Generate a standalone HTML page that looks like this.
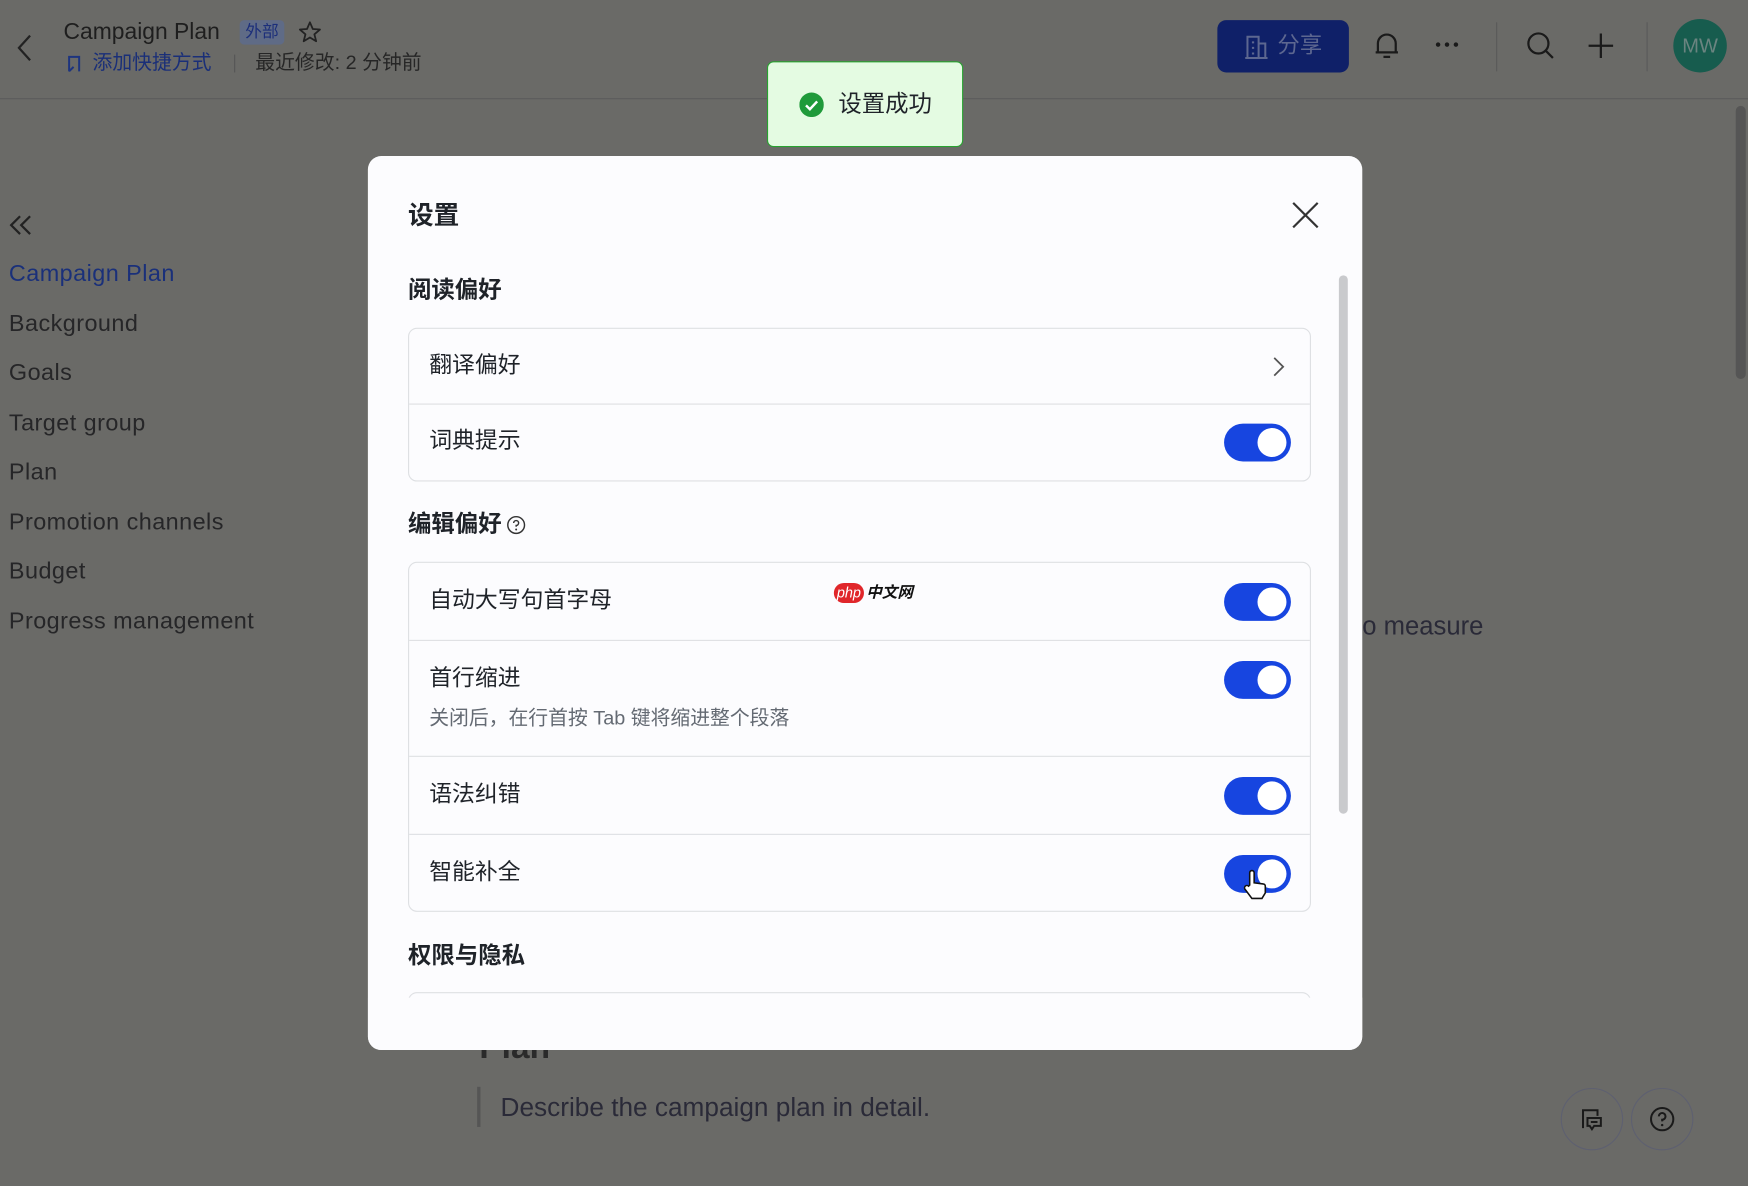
<!DOCTYPE html>
<html><head><meta charset="utf-8"><style>
*{margin:0;padding:0;box-sizing:border-box}
html,body{width:1748px;height:1186px;overflow:hidden;background:#6a6a67}
#w{position:absolute;left:0;top:0;width:1568px;height:1064px;transform:scale(1.1148,1.1147);transform-origin:0 0;font-family:"Liberation Sans","Noto Sans CJK SC",sans-serif}
.a{position:absolute;white-space:nowrap;line-height:1}
.side{color:#262628;font-size:21px;letter-spacing:0.4px;left:8px}
.row{position:absolute;left:18px;font-size:20.5px;color:#1f2329}
.tg{position:absolute;left:731px;width:60px;height:34px;border-radius:17px;background:#1745e0}
.tg:after{content:"";position:absolute;right:4px;top:4px;width:26px;height:26px;border-radius:50%;background:#fff}
.box{position:absolute;left:36px;width:810px;border:1px solid #dee0e3;border-radius:8px;background:#fcfcfe}
.dv{position:absolute;left:0;right:0;height:1px;background:#dee0e3}
</style></head><body><div id="w">
<div class="a" style="left:0;top:88px;width:1568px;height:1px;background:#5c5c5c"></div>
<svg class="a" style="left:12px;top:30px" width="20" height="26"><path d="M15 2 L5 13 L15 24" fill="none" stroke="#222" stroke-width="2"/></svg>
<div class="a" style="left:57px;top:19px;font-size:20.5px;color:#1e1e1e">Campaign Plan</div>
<div class="a" style="left:215px;top:18px;width:40px;height:22px;background:#5f6b86;border-radius:4px;color:#1c2f7a;font-size:15px;line-height:22px;text-align:center">外部</div>
<svg class="a" style="left:267px;top:18px" width="22" height="22"><path d="M11 2 L13.6 8 L20 8.5 L15 12.8 L16.6 19 L11 15.6 L5.4 19 L7 12.8 L2 8.5 L8.4 8 Z" fill="none" stroke="#222" stroke-width="1.6" stroke-linejoin="round"/></svg>
<svg class="a" style="left:59px;top:48px" width="16" height="18"><path d="M3 16 V3 H12 V16 M3 16 L7 12" fill="none" stroke="#1d347f" stroke-width="1.8"/></svg>
<div class="a" style="left:83px;top:48px;font-size:17.8px;color:#1a2f78">添加快捷方式</div>
<div class="a" style="left:210px;top:49px;width:1px;height:16px;background:#555"></div>
<div class="a" style="left:229px;top:48px;font-size:17.8px;color:#262626">最近修改: 2 分钟前</div>
<div class="a" style="left:1092px;top:18px;width:118px;height:47px;background:#0f2068;border-radius:8px"></div>
<svg class="a" style="left:1116px;top:30px" width="22" height="24"><path d="M3 22 V3 H13 V22 M13 9 H19 V22 M1 22 H21 M7 8 H9 M7 13 H9 M7 18 H9" fill="none" stroke="#5d6790" stroke-width="1.8"/></svg>
<div class="a" style="left:1146px;top:31px;font-size:20px;color:#5d6790">分享</div>
<svg class="a" style="left:1231px;top:27px" width="26" height="28"><path d="M5 20 V12 A8 8 0 0 1 21 12 V20 Z M3 20 H23 M10 24 H16" fill="none" stroke="#1a1a1a" stroke-width="2"/></svg>
<svg class="a" style="left:1286px;top:36px" width="26" height="8"><circle cx="4" cy="4" r="2" fill="#1a1a1a"/><circle cx="12" cy="4" r="2" fill="#1a1a1a"/><circle cx="20" cy="4" r="2" fill="#1a1a1a"/></svg>
<div class="a" style="left:1342px;top:20px;width:1px;height:44px;background:#5a5a5a"></div>
<svg class="a" style="left:1368px;top:27px" width="28" height="28"><circle cx="12" cy="12" r="9" fill="none" stroke="#1a1a1a" stroke-width="2"/><path d="M18.5 18.5 L25 25" stroke="#1a1a1a" stroke-width="2"/></svg>
<svg class="a" style="left:1424px;top:29px" width="24" height="24"><path d="M12 1 V23 M1 12 H23" stroke="#1a1a1a" stroke-width="2"/></svg>
<div class="a" style="left:1477px;top:20px;width:1px;height:44px;background:#5a5a5a"></div>
<div class="a" style="left:1501px;top:17px;width:48px;height:48px;border-radius:50%;background:#175c4e;color:#6a8480;font-size:18px;line-height:48px;text-align:center">MW</div>
<div class="a" style="left:1557px;top:95px;width:9px;height:245px;border-radius:5px;background:#555"></div>
<svg class="a" style="left:7px;top:192px" width="24" height="20"><path d="M11 2 L3 10 L11 18 M20 2 L12 10 L20 18" fill="none" stroke="#222" stroke-width="2"/></svg>
<div class="a side" style="top:235px;color:#1a307a">Campaign Plan</div>
<div class="a side" style="top:280px">Background</div>
<div class="a side" style="top:324px">Goals</div>
<div class="a side" style="top:369px">Target group</div>
<div class="a side" style="top:413px">Plan</div>
<div class="a side" style="top:458px">Promotion channels</div>
<div class="a side" style="top:502px">Budget</div>
<div class="a side" style="top:547px">Progress management</div>
<div class="a" style="left:1222px;top:550px;font-size:23px;color:#2a2a38">o measure</div>
<div class="a" style="left:430px;top:925px;font-size:30px;font-weight:bold;color:#2a2a2a">Plan</div>
<div class="a" style="left:428px;top:975px;width:3px;height:36px;background:#555"></div>
<div class="a" style="left:449px;top:982px;font-size:23.5px;color:#2a2a38">Describe the campaign plan in detail.</div>
<div class="a" style="left:1400px;top:976px;width:56px;height:56px;border-radius:50%;border:1px solid #5e6070"></div>
<svg class="a" style="left:1416px;top:992px" width="24" height="24"><path d="M4 20 V4 H17 V9 M8 11 H20 V18 H14 L12 21 L10 18 H8 Z M11 14.5 H17" fill="none" stroke="#1a1a1a" stroke-width="1.8"/></svg>
<div class="a" style="left:1463px;top:976px;width:56px;height:56px;border-radius:50%;border:1px solid #5e6070"></div>
<svg class="a" style="left:1479px;top:992px" width="24" height="24"><circle cx="12" cy="12" r="10" fill="none" stroke="#1a1a1a" stroke-width="1.8"/><path d="M9 9.5 A3 3 0 1 1 12 12.5 V14" fill="none" stroke="#1a1a1a" stroke-width="1.8"/><circle cx="12" cy="17.3" r="1.1" fill="#1a1a1a"/></svg>
<div class="a" style="left:330px;top:140px;width:892px;height:802px;background:#fcfcfe;border-radius:12px;overflow:hidden">
 <div class="a" style="left:36px;top:42px;font-size:23px;color:#1f2329;font-weight:bold">设置</div>
 <svg class="a" style="left:828px;top:40px" width="26" height="26"><path d="M2 2 L24 24 M24 2 L2 24" stroke="#333" stroke-width="2"/></svg>
 <div class="a" style="left:36px;top:110px;font-size:21px;color:#1f2329;font-weight:bold">阅读偏好</div>
 <div class="box" style="top:154px;height:138px">
  <div class="row" style="top:23px">翻译偏好</div>
  <svg class="a" style="left:774px;top:25px" width="12" height="18"><path d="M2 1 L10 9 L2 17" fill="none" stroke="#555" stroke-width="1.6"/></svg>
  <div class="dv" style="top:67px"></div>
  <div class="row" style="top:91px">词典提示</div>
  <div class="tg" style="top:85px"></div>
 </div>
 <div class="a" style="left:36px;top:320px;font-size:21px;color:#1f2329;font-weight:bold">编辑偏好</div>
 <svg class="a" style="left:124px;top:322px" width="18" height="18"><circle cx="9" cy="9" r="7.5" fill="none" stroke="#333" stroke-width="1.3"/><path d="M6.8 7.2 A2.2 2.2 0 1 1 9 9.4 V10.6" fill="none" stroke="#333" stroke-width="1.3"/><circle cx="9" cy="13" r=".9" fill="#333"/></svg>
 <div class="box" style="top:364px;height:314px">
  <div class="row" style="top:24px">自动大写句首字母</div>
  <div class="a" style="left:381px;top:18px;width:27px;height:18px;border-radius:9px;background:#e0262a;color:#fff;font-size:13px;font-style:italic;line-height:18px;text-align:center">php</div>
  <div class="a" style="left:410px;top:19px;font-size:14px;font-style:italic;color:#111;font-weight:bold">中文网</div>
  <div class="tg" style="top:18px"></div>
  <div class="dv" style="top:69px"></div>
  <div class="row" style="top:94px">首行缩进</div>
  <div class="tg" style="top:88px"></div>
  <div class="a" style="left:18px;top:131px;font-size:17.8px;color:#646a73">关闭后，在行首按 Tab 键将缩进整个段落</div>
  <div class="dv" style="top:173px"></div>
  <div class="row" style="top:198px">语法纠错</div>
  <div class="tg" style="top:192px"></div>
  <div class="dv" style="top:243px"></div>
  <div class="row" style="top:268px">智能补全</div>
  <div class="tg" style="top:262px"></div>
  <svg class="a" style="left:748px;top:275px" width="22" height="28"><path d="M6 14 V3 A2 2 0 0 1 10 3 V12 L18 13 A2 2 0 0 1 20 15 V21 L17 26 H8 L2 18 A2 2 0 0 1 5 15 Z" fill="#fff" stroke="#111" stroke-width="1.4"/></svg>
 </div>
 <div class="a" style="left:36px;top:707px;font-size:21px;color:#1f2329;font-weight:bold">权限与隐私</div>
 <div class="box" style="top:750px;height:80px"></div>
 <div class="a" style="left:0;top:755px;width:892px;height:47px;background:#fcfcfe"></div>
 <div class="a" style="left:871px;top:107px;width:8px;height:483px;border-radius:4px;background:#c9cacd"></div>
</div>
<div class="a" style="left:688px;top:55px;width:176px;height:77px;background:#e4fbe2;border:1px solid #27a22f;border-radius:6px"></div>
<svg class="a" style="left:717px;top:83px" width="22" height="22"><circle cx="11" cy="11" r="11" fill="#1f9a3a"/><path d="M6 11.5 L9.5 15 L16 8" fill="none" stroke="#fff" stroke-width="2.2"/></svg>
<div class="a" style="left:752px;top:83px;font-size:21px;color:#1f2329">设置成功</div>
</div></body></html>
